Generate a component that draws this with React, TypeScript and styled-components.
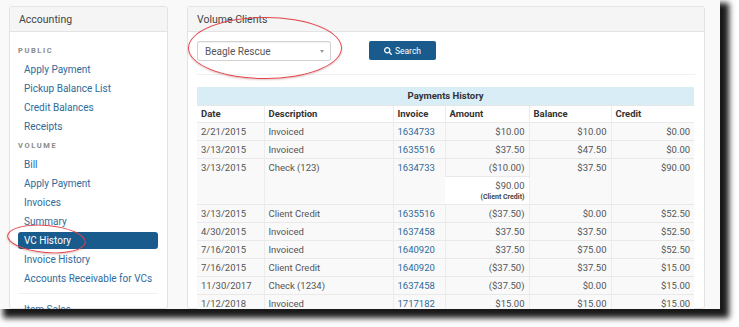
import React from 'react'
import styled, { createGlobalStyle } from 'styled-components'
import { FaSearch } from 'react-icons/fa'

const GlobalStyle = createGlobalStyle`
    html, body {
        margin: 0;
        padding: 0;
        background: #ffffff;
    }
    body {
        font-family: Roboto, "Liberation Sans", Arial, sans-serif;
    }
    * {
        box-sizing: border-box;
    }
`

const Page = styled.div`
    width: 739px;
    height: 327px;
    background: #ffffff;
`
const Frame = styled.div`
    position: relative;
    width: 720px;
    height: 309px;
    overflow: hidden;
    background: #f9f9f9;
    box-shadow: 6px 6px 6px 3px rgba(0, 0, 0, 0.9);
    display: flex;
    gap: 19px;
    padding: 6px 0 0 9px;
`
const Panel = styled.div<{ $width: number }>`
    width: ${p => p.$width}px;
    flex: none;
    background: #ffffff;
    border: 1px solid #e3e3e3;
    border-radius: 3px;
    display: flex;
    flex-direction: column;
`
const PanelHeader = styled.div`
    height: 25px;
    flex: none;
    display: flex;
    align-items: center;
    padding: 0 9px;
    background: #f5f5f5;
    border-bottom: 1px solid #e3e3e3;
    border-radius: 3px 3px 0 0;
    font-size: 10.5px;
    color: #444;
`
const NavBody = styled.div`
    padding: 9px 9px 0 8px;
    display: flex;
    flex-direction: column;
`
const NavHeading = styled.div`
    height: 19px;
    display: flex;
    align-items: center;
    font-size: 7.5px;
    font-weight: 700;
    letter-spacing: 1.6px;
    color: #8a8a8a;
`
const NavItem = styled.div<{ $active?: boolean }>`
    height: 19px;
    display: flex;
    align-items: center;
    padding-left: 6px;
    font-size: 10px;
    color: ${p => (p.$active ? '#ffffff' : '#2f6a9a')};
    background: ${p => (p.$active ? '#185b8c' : 'transparent')};
    border-radius: 3px;
    ${p => p.$active && 'height: 17px; margin: 1px 0;'}
`
const NavDivider = styled.div`
    height: 1px;
    background: #f0f0f0;
    margin: 5px 0 6px;
`
const Content = styled.div`
    padding: 9px 9px 0 9px;
`
const Toolbar = styled.div`
    display: flex;
    align-items: flex-start;
    gap: 38px;
    padding-bottom: 13px;
    border-bottom: 1px solid #f1f1f1;
`
const SelectBox = styled.div`
    width: 134px;
    height: 20px;
    border: 1px solid #d2d2d2;
    border-radius: 2px;
    box-shadow: inset 0 1px 1px rgba(0, 0, 0, 0.06);
    display: flex;
    align-items: center;
    justify-content: space-between;
    padding: 0 6px 0 7px;
    font-size: 10px;
    color: #555;
`
const Caret = styled.span`
    width: 0;
    height: 0;
    border-left: 2.5px solid transparent;
    border-right: 2.5px solid transparent;
    border-top: 3px solid #999;
`
const SearchButton = styled.div`
    width: 67px;
    height: 19px;
    background: #185b8c;
    border-radius: 2px;
    display: flex;
    align-items: center;
    justify-content: center;
    gap: 3px;
    color: #ffffff;
    font-size: 8.5px;
    svg {
        width: 8px;
        height: 8px;
    }
`
const Table = styled.table`
    margin-top: 12px;
    width: 497px;
    border-collapse: collapse;
    table-layout: fixed;
    font-size: 9.5px;
    color: #555;
`
const TitleCell = styled.th`
    height: 18px;
    background: #d9edf7;
    color: #333;
    font-weight: 700;
    text-align: center;
    padding: 0;
`
const HeadCell = styled.th`
    height: 17px;
    text-align: left;
    font-weight: 700;
    color: #333;
    padding: 0 4px;
    border-top: 1px solid #e6e6e6;
    border-left: 1px solid #ececec;
    background: #ffffff;
    &:first-child {
        border-left: none;
    }
`
const Cell = styled.td<{ $align?: string; $white?: boolean }>`
    height: 18px;
    padding: 0 4px;
    text-align: ${p => p.$align || 'left'};
    vertical-align: top;
    line-height: 17px;
    border-top: 1px solid #e9e9e9;
    border-left: 1px solid #ececec;
    background: ${p => (p.$white ? '#ffffff' : '#f9f9f9')};
    white-space: nowrap;
    &:first-child {
        border-left: none;
    }
`
const Link = styled.span`
    color: #2f6a9a;
`
const SubAmount = styled.div`
    line-height: 15px;
    padding-top: 1px;
`
const SubNote = styled.div`
    font-size: 7px;
    font-weight: 700;
    line-height: 8px;
    color: #444;
    padding-bottom: 3px;
`
const Ellipse = styled.div<{ $x: number; $y: number; $w: number; $h: number; $rot: number }>`
    position: absolute;
    left: ${p => p.$x}px;
    top: ${p => p.$y}px;
    width: ${p => p.$w}px;
    height: ${p => p.$h}px;
    border: 1.5px solid #e2454b;
    border-radius: 50%;
    transform: rotate(${p => p.$rot}deg);
    box-shadow: 0 1px 2px rgba(120, 0, 0, 0.25);
    pointer-events: none;
`

const rows = [
    ['2/21/2015', 'Invoiced', '1634733', '$10.00', '$10.00', '$0.00'],
    ['3/13/2015', 'Invoiced', '1635516', '$37.50', '$47.50', '$0.00'],
]
const laterRows = [
    ['3/13/2015', 'Client Credit', '1635516', '($37.50)', '$0.00', '$52.50'],
    ['4/30/2015', 'Invoiced', '1637458', '$37.50', '$37.50', '$52.50'],
    ['7/16/2015', 'Invoiced', '1640920', '$37.50', '$75.00', '$52.50'],
    ['7/16/2015', 'Client Credit', '1640920', '($37.50)', '$37.50', '$15.00'],
    ['11/30/2017', 'Check (1234)', '1637458', '($37.50)', '$0.00', '$15.00'],
    ['1/12/2018', 'Invoiced', '1717182', '$15.00', '$15.00', '$15.00'],
]

const Row = ({ r }: { r: string[] }) => (
    <tr>
        <Cell>{r[0]}</Cell>
        <Cell>{r[1]}</Cell>
        <Cell><Link>{r[2]}</Link></Cell>
        <Cell $align="right">{r[3]}</Cell>
        <Cell $align="right">{r[4]}</Cell>
        <Cell $align="right">{r[5]}</Cell>
    </tr>
)

export default function App() {
    return (
        <Page>
            <GlobalStyle />
            <Frame>
                <Panel $width={159}>
                    <PanelHeader>Accounting</PanelHeader>
                    <NavBody>
                        <NavHeading>PUBLIC</NavHeading>
                        <NavItem>Apply Payment</NavItem>
                        <NavItem>Pickup Balance List</NavItem>
                        <NavItem>Credit Balances</NavItem>
                        <NavItem>Receipts</NavItem>
                        <NavHeading>VOLUME</NavHeading>
                        <NavItem>Bill</NavItem>
                        <NavItem>Apply Payment</NavItem>
                        <NavItem>Invoices</NavItem>
                        <NavItem>Summary</NavItem>
                        <NavItem $active>VC History</NavItem>
                        <NavItem>Invoice History</NavItem>
                        <NavItem>Accounts Receivable for VCs</NavItem>
                        <NavDivider />
                        <NavItem>Item Sales</NavItem>
                    </NavBody>
                </Panel>
                <Panel $width={518}>
                    <PanelHeader>Volume Clients</PanelHeader>
                    <Content>
                        <Toolbar>
                            <SelectBox>
                                Beagle Rescue
                                <Caret />
                            </SelectBox>
                            <SearchButton>
                                <FaSearch />
                                Search
                            </SearchButton>
                        </Toolbar>
                        <Table>
                            <colgroup>
                                <col style={{ width: 67 }} />
                                <col style={{ width: 129 }} />
                                <col style={{ width: 52 }} />
                                <col style={{ width: 84 }} />
                                <col style={{ width: 82 }} />
                                <col style={{ width: 83 }} />
                            </colgroup>
                            <thead>
                                <tr>
                                    <TitleCell colSpan={6}>Payments History</TitleCell>
                                </tr>
                                <tr>
                                    <HeadCell>Date</HeadCell>
                                    <HeadCell>Description</HeadCell>
                                    <HeadCell>Invoice</HeadCell>
                                    <HeadCell>Amount</HeadCell>
                                    <HeadCell>Balance</HeadCell>
                                    <HeadCell>Credit</HeadCell>
                                </tr>
                            </thead>
                            <tbody>
                                {rows.map((r, i) => <Row key={i} r={r} />)}
                                <tr>
                                    <Cell rowSpan={2}>3/13/2015</Cell>
                                    <Cell rowSpan={2}>Check (123)</Cell>
                                    <Cell rowSpan={2}><Link>1634733</Link></Cell>
                                    <Cell $align="right">($10.00)</Cell>
                                    <Cell rowSpan={2} $align="right">$37.50</Cell>
                                    <Cell rowSpan={2} $align="right">$90.00</Cell>
                                </tr>
                                <tr>
                                    <Cell $align="right" $white>
                                        <SubAmount>$90.00</SubAmount>
                                        <SubNote>(Client Credit)</SubNote>
                                    </Cell>
                                </tr>
                                {laterRows.map((r, i) => <Row key={i} r={r} />)}
                            </tbody>
                        </Table>
                    </Content>
                </Panel>
                <Ellipse $x={188} $y={17} $w={154} $h={62} $rot={0} />
                <Ellipse $x={7} $y={225} $w={79} $h={28} $rot={5} />
            </Frame>
        </Page>
    )
}
